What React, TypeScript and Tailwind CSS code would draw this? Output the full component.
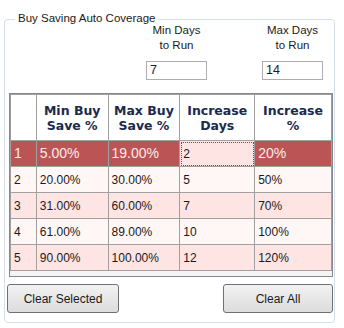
import React from 'react';

type Row = { id: number; min: string; max: string; days: string; pct: string };

const rows: Row[] = [
  { id: 1, min: '5.00%', max: '19.00%', days: '2', pct: '20%' },
  { id: 2, min: '20.00%', max: '30.00%', days: '5', pct: '50%' },
  { id: 3, min: '31.00%', max: '60.00%', days: '7', pct: '70%' },
  { id: 4, min: '61.00%', max: '89.00%', days: '10', pct: '100%' },
  { id: 5, min: '90.00%', max: '100.00%', days: '12', pct: '120%' },
];

const font = { fontFamily: 'Tahoma, "DejaVu Sans", "Liberation Sans", sans-serif' };

const DaysField = ({ label, value }: { label: string[]; value: string }) => (
  <div className="flex w-[61px] flex-col items-center">
    <div className="flex h-[38px] flex-col items-center leading-[15px]">
      {label.map(l => (
        <span key={l}>{l}</span>
      ))}
    </div>
    <div className="h-[19px] w-full border border-[#abadb3] bg-white px-[3px] text-[12.5px] leading-[17px]">
      {value}
    </div>
  </div>
);

export default function App() {
  const th =
    'border border-[#a0a0a0] px-[1px] text-center align-middle text-[12.5px] font-bold leading-[15px] text-[#1b2a4c]';
  return (
    <div
      className="h-[328px] w-[344px] bg-white pt-[19px] pl-[4px] text-[11.5px] text-[#1a1a1a]"
      style={{ fontFamily: '"Liberation Sans", Arial, sans-serif' }}
    >
      <div className="relative h-[304px] w-[331px] rounded-[4px] border border-[#d5dfe5]">
        <span className="absolute left-[10px] top-[-8px] bg-white px-[3px] leading-[13px]">
          Buy Saving Auto Coverage
        </span>

        <div className="flex justify-end gap-[55px] pt-[3px] pr-[11px]">
          <DaysField label={['Min Days', 'to Run']} value="7" />
          <DaysField label={['Max Days', 'to Run']} value="14" />
        </div>

        <div className="ml-[4px] mt-[13px] h-[184px] w-[324px] border border-[#828790] bg-[#f4f4f4]">
          <table className="border-collapse" style={{ tableLayout: 'fixed' }}>
            <colgroup>
              <col className="w-[26px]" />
              <col className="w-[72px]" />
              <col className="w-[72px]" />
              <col className="w-[75px]" />
              <col className="w-[77px]" />
            </colgroup>
            <thead>
              <tr className="h-[46px] bg-white" style={font}>
                <th className="border border-[#a0a0a0]" />
                <th className={th}>
                  Min Buy
                  <br />
                  Save %
                </th>
                <th className={th}>
                  Max Buy
                  <br />
                  Save %
                </th>
                <th className={th}>
                  Increase
                  <br />
                  Days
                </th>
                <th className={th}>
                  Increase
                  <br />%
                </th>
              </tr>
            </thead>
            <tbody>
              {rows.map(r => {
                const sel = r.id === 1;
                const bg = r.id % 2 === 1 ? 'bg-[#ffe4e4]' : 'bg-[#fff6f6]';
                const td = 'border border-[#a0a0a0] px-[3px] text-left align-middle text-[12px]';
                const selTd = `border border-[#a0a0a0] px-[3px] text-left align-middle bg-[#bb5555] text-[14px] text-[#fbeaea]`;
                return (
                  <tr key={r.id} className={`h-[26px] ${bg}`}>
                    <td className={sel ? selTd : td}>{r.id}</td>
                    <td className={sel ? selTd : td}>{r.min}</td>
                    <td className={sel ? selTd : td}>{r.max}</td>
                    <td
                      className={
                        sel
                          ? `${td} outline-1 outline-dotted outline-offset-[-2px] outline-[#555]`
                          : td
                      }
                    >
                      {r.days}
                    </td>
                    <td className={sel ? selTd : td}>{r.pct}</td>
                  </tr>
                );
              })}
            </tbody>
          </table>
        </div>

        <div className="mt-[7px] flex justify-between pl-[2px] pr-[1px]">
          <button className="h-[29px] w-[112px] rounded-[3px] border border-[#707070] bg-gradient-to-b from-[#f2f2f2] to-[#dcdcdc] text-[12px]">
            Clear Selected
          </button>
          <button className="h-[29px] w-[110px] rounded-[3px] border border-[#707070] bg-gradient-to-b from-[#f2f2f2] to-[#dcdcdc] text-[12px]">
            Clear All
          </button>
        </div>
      </div>
    </div>
  );
}
